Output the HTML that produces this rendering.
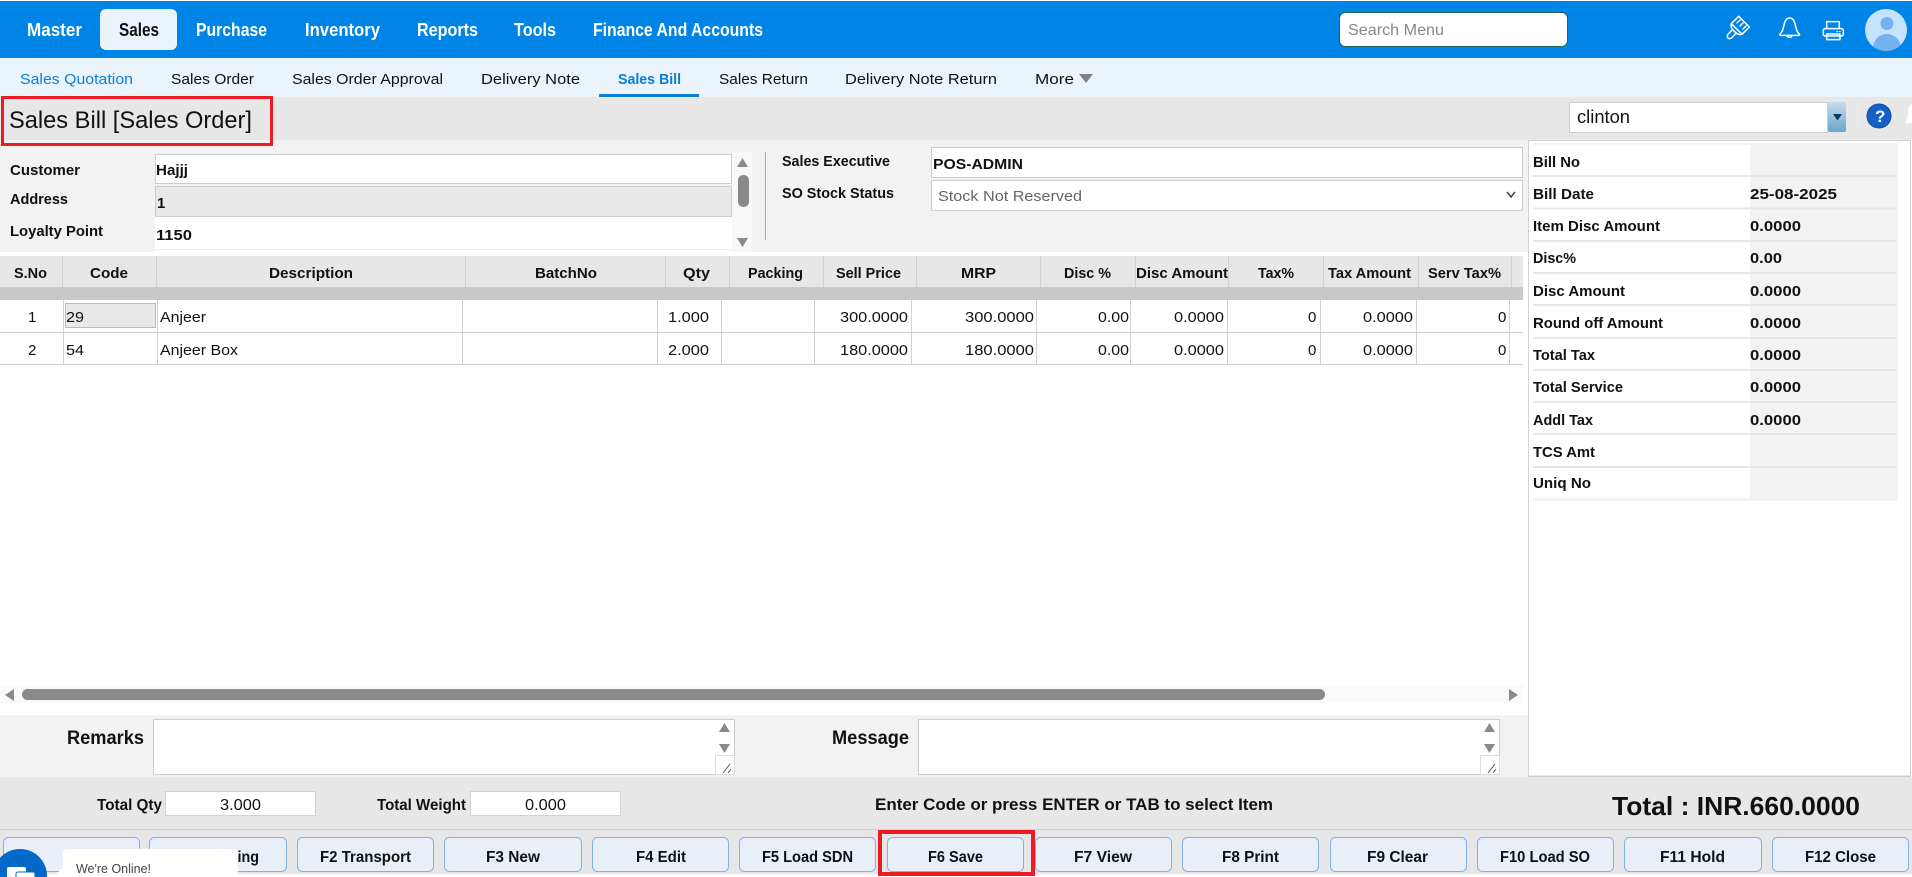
<!DOCTYPE html>
<html lang="en"><head><meta charset="utf-8"><title>Sales Bill [Sales Order]</title>
<style>
html,body{margin:0;padding:0;width:1912px;height:877px;overflow:hidden;background:#fff}
svg{display:block;position:absolute;left:0;top:0}
text{font-family:"Liberation Sans",sans-serif;fill:#111;font-size:15px;white-space:pre}
.b{font-weight:700}
.n{font-size:18px;font-weight:700;fill:#fff}
.s{font-size:15px;fill:#111}
.sb{font-size:15px;fill:#0a7fd9}
.btn{font-size:16px;font-weight:700}
</style></head><body>
<svg width="1912" height="877" viewBox="0 0 1912 877" xmlns="http://www.w3.org/2000/svg">
<defs>
<linearGradient id="ga" x1="0" y1="0" x2="0" y2="1"><stop offset="0" stop-color="#c6dcec"/><stop offset="1" stop-color="#6ba5ce"/></linearGradient>
<clipPath id="av"><circle cx="1886" cy="30" r="21"/></clipPath>
</defs>
<rect width="1912" height="877" fill="#fff"/>
<!-- top nav -->
<rect x="0" y="1" width="1912" height="57" fill="#0084e6"/>
<rect x="100" y="9" width="77" height="41" rx="6" fill="#eaf3fb"/>
<text class="n" x="27" y="36" textLength="55" lengthAdjust="spacingAndGlyphs">Master</text>
<text class="n" x="119" y="36" textLength="40" lengthAdjust="spacingAndGlyphs" style="fill:#111">Sales</text>
<text class="n" x="196" y="36" textLength="71" lengthAdjust="spacingAndGlyphs">Purchase</text>
<text class="n" x="305" y="36" textLength="75" lengthAdjust="spacingAndGlyphs">Inventory</text>
<text class="n" x="417" y="36" textLength="61" lengthAdjust="spacingAndGlyphs">Reports</text>
<text class="n" x="514" y="36" textLength="42" lengthAdjust="spacingAndGlyphs">Tools</text>
<text class="n" x="593" y="36" textLength="170" lengthAdjust="spacingAndGlyphs">Finance And Accounts</text>
<rect x="1339.500" y="12.500" width="228" height="34" rx="6" fill="#fff" stroke="#1f6b4a"/>
<text x="1348" y="35" textLength="96" lengthAdjust="spacingAndGlyphs" style="font-size:16px;fill:#888">Search Menu</text>
<!-- header icons -->
<g transform="translate(1720,10) scale(.3333)" fill="none" stroke="#fff" stroke-width="4.5" stroke-linejoin="round" stroke-linecap="round">
<path d="M56 19L88 51L66 73L34 41Z"/>
<path d="M60 30l-9 9M69 39l-9 9M78 48l-9 9"/>
<path d="M34 41c-3 8 2 17 8 22M66 73c-8 3-18-2-24-10"/>
<path d="M38 58L24 73a7 7 0 0 0 10 11L49 69"/>
<path d="M180 72C195 62 188 24 209 24C230 24 223 62 238 72C240 74 239 76 236 76H182C179 76 178 74 180 72Z"/>
<path d="M201 77a8 8 0 0 0 15 0"/>
<path d="M320 56V35H358V56"/>
<rect x="310" y="56" width="60" height="22" rx="5"/>
<path d="M320 72H360V89H320Z"/>
<path d="M350 65h3M358 65h3" stroke-width="3"/>
</g>
<circle cx="1886" cy="30" r="21" fill="#c5e3ff"/>
<g clip-path="url(#av)"><circle cx="1887" cy="23.500" r="6.500" fill="#73b3ef"/><ellipse cx="1887" cy="48" rx="14" ry="14" fill="#73b3ef"/></g>
<!-- sub nav -->
<rect x="0" y="58" width="1912" height="39" fill="#ebf3fb"/>
<text class="sb" x="20" y="84" textLength="113" lengthAdjust="spacingAndGlyphs">Sales Quotation</text>
<text class="s" x="171" y="84" textLength="83" lengthAdjust="spacingAndGlyphs">Sales Order</text>
<text class="s" x="292" y="84" textLength="151" lengthAdjust="spacingAndGlyphs">Sales Order Approval</text>
<text class="s" x="481" y="84" textLength="99" lengthAdjust="spacingAndGlyphs">Delivery Note</text>
<text class="sb b" x="618" y="84" textLength="63" lengthAdjust="spacingAndGlyphs">Sales Bill</text>
<rect x="599" y="94" width="100" height="3" fill="#0a7fd9"/>
<text class="s" x="719" y="84" textLength="89" lengthAdjust="spacingAndGlyphs">Sales Return</text>
<text class="s" x="845" y="84" textLength="152" lengthAdjust="spacingAndGlyphs">Delivery Note Return</text>
<text class="s" x="1035" y="84" textLength="39" lengthAdjust="spacingAndGlyphs">More</text>
<path d="M1079 74h14l-7 9z" fill="#808080"/>
<!-- title bar -->
<rect x="0" y="97" width="1912" height="43" fill="#e7e7e7"/>
<text x="9" y="128" textLength="243" lengthAdjust="spacingAndGlyphs" style="font-size:24px">Sales Bill [Sales Order]</text>
<rect x="1569.500" y="102.500" width="258" height="30" fill="#fff" stroke="#ccc"/>
<text x="1577" y="123" textLength="53" lengthAdjust="spacingAndGlyphs" style="font-size:18px">clinton</text>
<rect x="1828" y="102" width="18" height="30" rx="2" fill="url(#ga)"/>
<path d="M1833 114h9l-4.500 6.500z" fill="#0f3560"/>
<rect x="1857" y="103" width="1" height="28" fill="#eee"/>
<circle cx="1879" cy="116" r="12" fill="#1560c8" stroke="#134a8e"/>
<text x="1875" y="122" class="b" style="font-size:17px;fill:#fff">?</text>
<path d="M1912 104c-3 1-4 4-4 8 0 5-1 7-2 9v2h6z" fill="#fff"/>
<!-- form -->
<rect x="0" y="140" width="1528" height="112" fill="#f2f2f2"/>
<rect x="155.500" y="154.500" width="576" height="29" fill="#fff" stroke="#ccc"/>
<rect x="155.500" y="186.500" width="576" height="30" fill="#e8e8e8" stroke="#ccc"/>
<rect x="155" y="217" width="577" height="35" fill="#fff"/>
<rect x="155" y="249" width="577" height="1" fill="#eee"/>
<rect x="732" y="152" width="20" height="100" fill="#f8f8f8"/>
<path d="M737 167l5.500-9 5.500 9z" fill="#8a8a8a"/>
<path d="M737 238l5.500 9 5.500-9z" fill="#8a8a8a"/>
<rect x="738" y="175" width="11" height="32" rx="5" fill="#8a8a8a"/>
<rect x="765" y="152" width="1" height="88" fill="#aaa"/>
<text class="b" x="10" y="175" textLength="70" lengthAdjust="spacingAndGlyphs">Customer</text>
<text class="b" x="10" y="204" textLength="58" lengthAdjust="spacingAndGlyphs">Address</text>
<text class="b" x="10" y="236" textLength="93" lengthAdjust="spacingAndGlyphs">Loyalty Point</text>
<text class="b" x="156" y="175" textLength="32" lengthAdjust="spacingAndGlyphs">Hajjj</text>
<text class="b" x="157" y="208">1</text>
<text class="b" x="156" y="240" textLength="36" lengthAdjust="spacingAndGlyphs">1150</text>
<text class="b" x="782" y="166" textLength="108" lengthAdjust="spacingAndGlyphs">Sales Executive</text>
<text class="b" x="782" y="198" textLength="112" lengthAdjust="spacingAndGlyphs">SO Stock Status</text>
<rect x="931.500" y="147.500" width="591" height="30" fill="#fff" stroke="#ccc"/>
<rect x="931.500" y="180.500" width="591" height="30" fill="#fff" stroke="#ccc"/>
<text class="b" x="933" y="169" textLength="90" lengthAdjust="spacingAndGlyphs">POS-ADMIN</text>
<text x="938" y="201" textLength="144" lengthAdjust="spacingAndGlyphs" style="fill:#666">Stock Not Reserved</text>
<path d="M1507 192l4 5 4-5" fill="none" stroke="#444" stroke-width="1.500"/>
<!-- page title highlight -->
<rect x="2.500" y="97.500" width="269" height="47" fill="none" stroke="#ed1c24" stroke-width="3"/>
<!-- grid header -->
<rect x="0" y="256" width="1523" height="31" fill="#e7e7e7"/>
<rect x="0" y="287" width="1523" height="13" fill="#c8c8c8"/>
<g fill="#d2d2d2">
<rect x="62" y="256" width="1" height="31"/><rect x="156" y="256" width="1" height="31"/><rect x="465" y="256" width="1" height="31"/><rect x="665" y="256" width="1" height="31"/><rect x="729" y="256" width="1" height="31"/><rect x="823" y="256" width="1" height="31"/><rect x="916" y="256" width="1" height="31"/><rect x="1040" y="256" width="1" height="31"/><rect x="1135" y="256" width="1" height="31"/><rect x="1228" y="256" width="1" height="31"/><rect x="1323" y="256" width="1" height="31"/><rect x="1418" y="256" width="1" height="31"/><rect x="1511" y="256" width="1" height="31"/>
</g>
<text class="b" x="14" y="278" textLength="33" lengthAdjust="spacingAndGlyphs">S.No</text>
<text class="b" x="90" y="278" textLength="38" lengthAdjust="spacingAndGlyphs">Code</text>
<text class="b" x="269" y="278" textLength="84" lengthAdjust="spacingAndGlyphs">Description</text>
<text class="b" x="535" y="278" textLength="62" lengthAdjust="spacingAndGlyphs">BatchNo</text>
<text class="b" x="683" y="278" textLength="27" lengthAdjust="spacingAndGlyphs">Qty</text>
<text class="b" x="748" y="278" textLength="55" lengthAdjust="spacingAndGlyphs">Packing</text>
<text class="b" x="836" y="278" textLength="65" lengthAdjust="spacingAndGlyphs">Sell Price</text>
<text class="b" x="961" y="278" textLength="35" lengthAdjust="spacingAndGlyphs">MRP</text>
<text class="b" x="1064" y="278" textLength="47" lengthAdjust="spacingAndGlyphs">Disc %</text>
<text class="b" x="1136" y="278" textLength="92" lengthAdjust="spacingAndGlyphs">Disc Amount</text>
<text class="b" x="1258" y="278" textLength="36" lengthAdjust="spacingAndGlyphs">Tax%</text>
<text class="b" x="1328" y="278" textLength="83" lengthAdjust="spacingAndGlyphs">Tax Amount</text>
<text class="b" x="1428" y="278" textLength="73" lengthAdjust="spacingAndGlyphs">Serv Tax%</text>
<!-- grid rows -->
<rect x="0" y="332" width="1523" height="1" fill="#ccc"/>
<rect x="0" y="364" width="1523" height="1" fill="#ccc"/>
<g fill="#d2d2d2">
<rect x="63" y="300" width="1" height="64"/><rect x="157" y="300" width="1" height="64"/><rect x="462" y="300" width="1" height="64"/><rect x="657" y="300" width="1" height="64"/><rect x="721" y="300" width="1" height="64"/><rect x="814" y="300" width="1" height="64"/><rect x="911" y="300" width="1" height="64"/><rect x="1036" y="300" width="1" height="64"/><rect x="1130" y="300" width="1" height="64"/><rect x="1227" y="300" width="1" height="64"/><rect x="1320" y="300" width="1" height="64"/><rect x="1416" y="300" width="1" height="64"/><rect x="1509" y="300" width="1" height="64"/>
</g>
<rect x="65.500" y="303.500" width="90" height="24" fill="#e8e8e8" stroke="#bbb"/>
<text x="28" y="322">1</text>
<text x="66" y="322" textLength="18" lengthAdjust="spacingAndGlyphs">29</text>
<text x="160" y="322" textLength="46" lengthAdjust="spacingAndGlyphs">Anjeer</text>
<text x="668" y="322" textLength="41" lengthAdjust="spacingAndGlyphs">1.000</text>
<text x="840" y="322" textLength="68" lengthAdjust="spacingAndGlyphs">300.0000</text>
<text x="965" y="322" textLength="69" lengthAdjust="spacingAndGlyphs">300.0000</text>
<text x="1098" y="322" textLength="31" lengthAdjust="spacingAndGlyphs">0.00</text>
<text x="1174" y="322" textLength="50" lengthAdjust="spacingAndGlyphs">0.0000</text>
<text x="1308" y="322">0</text>
<text x="1363" y="322" textLength="50" lengthAdjust="spacingAndGlyphs">0.0000</text>
<text x="1498" y="322">0</text>
<text x="28" y="355">2</text>
<text x="66" y="355" textLength="18" lengthAdjust="spacingAndGlyphs">54</text>
<text x="160" y="355" textLength="78" lengthAdjust="spacingAndGlyphs">Anjeer Box</text>
<text x="668" y="355" textLength="41" lengthAdjust="spacingAndGlyphs">2.000</text>
<text x="840" y="355" textLength="68" lengthAdjust="spacingAndGlyphs">180.0000</text>
<text x="965" y="355" textLength="69" lengthAdjust="spacingAndGlyphs">180.0000</text>
<text x="1098" y="355" textLength="31" lengthAdjust="spacingAndGlyphs">0.00</text>
<text x="1174" y="355" textLength="50" lengthAdjust="spacingAndGlyphs">0.0000</text>
<text x="1308" y="355">0</text>
<text x="1363" y="355" textLength="50" lengthAdjust="spacingAndGlyphs">0.0000</text>
<text x="1498" y="355">0</text>
<!-- h scroll -->
<rect x="0" y="685" width="1523" height="18" fill="#fafafa"/>
<rect x="22" y="689" width="1303" height="11" rx="5.500" fill="#8a8a8a"/>
<path d="M14 689v12l-9-6z" fill="#8a8a8a"/>
<path d="M1509 689v12l9-6z" fill="#8a8a8a"/>
<!-- right panel -->
<rect x="1528.500" y="140.500" width="382" height="636" fill="#fff" stroke="#d4d4d4"/>
<rect x="1528" y="775.500" width="383" height="2" fill="#ccc"/>
<rect x="1533" y="143" width="365" height="358" fill="#f2f2f2"/>
<g fill="#fff">
<rect x="1533" y="145" width="217" height="30"/><rect x="1533" y="177" width="217" height="31"/><rect x="1533" y="209" width="217" height="31"/><rect x="1533" y="242" width="217" height="30"/><rect x="1533" y="274" width="217" height="30"/><rect x="1533" y="306" width="217" height="31"/><rect x="1533" y="339" width="217" height="30"/><rect x="1533" y="371" width="217" height="30"/><rect x="1533" y="403" width="217" height="30"/><rect x="1533" y="435" width="217" height="31"/><rect x="1533" y="468" width="217" height="30"/>
</g>
<g fill="#e6e6e6">
<rect x="1533" y="175" width="363" height="2"/><rect x="1533" y="207.500" width="363" height="2"/><rect x="1533" y="240" width="363" height="2"/><rect x="1533" y="272" width="363" height="2"/><rect x="1533" y="304" width="363" height="2"/><rect x="1533" y="337" width="363" height="2"/><rect x="1533" y="369" width="363" height="2"/><rect x="1533" y="401" width="363" height="2"/><rect x="1533" y="433" width="363" height="2"/><rect x="1533" y="466" width="363" height="2"/>
</g>
<text class="b" x="1533" y="167" textLength="47" lengthAdjust="spacingAndGlyphs">Bill No</text>
<text class="b" x="1533" y="199" textLength="61" lengthAdjust="spacingAndGlyphs">Bill Date</text>
<text class="b" x="1533" y="231" textLength="127" lengthAdjust="spacingAndGlyphs">Item Disc Amount</text>
<text class="b" x="1533" y="263" textLength="43" lengthAdjust="spacingAndGlyphs">Disc%</text>
<text class="b" x="1533" y="296" textLength="92" lengthAdjust="spacingAndGlyphs">Disc Amount</text>
<text class="b" x="1533" y="328" textLength="130" lengthAdjust="spacingAndGlyphs">Round off Amount</text>
<text class="b" x="1533" y="360" textLength="62" lengthAdjust="spacingAndGlyphs">Total Tax</text>
<text class="b" x="1533" y="392" textLength="90" lengthAdjust="spacingAndGlyphs">Total Service</text>
<text class="b" x="1533" y="425" textLength="60" lengthAdjust="spacingAndGlyphs">Addl Tax</text>
<text class="b" x="1533" y="457" textLength="62" lengthAdjust="spacingAndGlyphs">TCS Amt</text>
<text class="b" x="1533" y="488" textLength="58" lengthAdjust="spacingAndGlyphs">Uniq No</text>
<text class="b" x="1750" y="199" textLength="87" lengthAdjust="spacingAndGlyphs">25-08-2025</text>
<text class="b" x="1750" y="231" textLength="51" lengthAdjust="spacingAndGlyphs">0.0000</text>
<text class="b" x="1750" y="263" textLength="32" lengthAdjust="spacingAndGlyphs">0.00</text>
<text class="b" x="1750" y="296" textLength="51" lengthAdjust="spacingAndGlyphs">0.0000</text>
<text class="b" x="1750" y="328" textLength="51" lengthAdjust="spacingAndGlyphs">0.0000</text>
<text class="b" x="1750" y="360" textLength="51" lengthAdjust="spacingAndGlyphs">0.0000</text>
<text class="b" x="1750" y="392" textLength="51" lengthAdjust="spacingAndGlyphs">0.0000</text>
<text class="b" x="1750" y="425" textLength="51" lengthAdjust="spacingAndGlyphs">0.0000</text>
<!-- remarks -->
<rect x="0" y="715" width="1528" height="62" fill="#f2f2f2"/>
<text class="b" x="67" y="744" textLength="77" lengthAdjust="spacingAndGlyphs" style="font-size:19px">Remarks</text>
<text class="b" x="832" y="744" textLength="77" lengthAdjust="spacingAndGlyphs" style="font-size:19px">Message</text>
<rect x="153.500" y="719.500" width="581" height="55" fill="#fff" stroke="#ccc"/>
<rect x="918.500" y="719.500" width="581" height="55" fill="#fff" stroke="#ccc"/>
<path d="M719 732l5.500-9 5.500 9zM719 744l5.500 9 5.500-9z" fill="#8a8a8a"/>
<path d="M1484 732l5.500-9 5.500 9zM1484 744l5.500 9 5.500-9z" fill="#8a8a8a"/>
<rect x="715.500" y="755.500" width="19" height="19" fill="#fff" stroke="#ddd"/>
<rect x="1480.500" y="755.500" width="19" height="19" fill="#fff" stroke="#ddd"/>
<path d="M723 773l7-9M728 773l3-4M1488 773l7-9M1493 773l3-4" stroke="#555" fill="none"/>
<!-- totals bar -->
<rect x="0" y="777" width="1912" height="97" fill="#e7e7e7"/>
<rect x="0" y="829" width="1912" height="1" fill="#d0d0d0"/>
<text class="b" x="97" y="810" textLength="65" lengthAdjust="spacingAndGlyphs" style="font-size:16px">Total Qty</text>
<rect x="165.500" y="791.500" width="150" height="24" fill="#fff" stroke="#d2d2d2"/>
<text x="220" y="810" textLength="41" lengthAdjust="spacingAndGlyphs" style="font-size:16px">3.000</text>
<text class="b" x="377" y="810" textLength="89" lengthAdjust="spacingAndGlyphs" style="font-size:16px">Total Weight</text>
<rect x="470.500" y="791.500" width="150" height="24" fill="#fff" stroke="#d2d2d2"/>
<text x="525" y="810" textLength="41" lengthAdjust="spacingAndGlyphs" style="font-size:16px">0.000</text>
<text class="b" x="875" y="810" textLength="398" lengthAdjust="spacingAndGlyphs" style="font-size:17px">Enter Code or press ENTER or TAB to select Item</text>
<text class="b" x="1612" y="815" textLength="248" lengthAdjust="spacingAndGlyphs" style="font-size:26px">Total : INR.660.0000</text>
<!-- buttons -->
<g fill="#e9eff8" stroke="#7fb3e8">
<rect x="3.500" y="837.500" width="136" height="34" rx="5"/><rect x="149.500" y="837.500" width="137" height="34" rx="5"/><rect x="297.500" y="837.500" width="136" height="34" rx="5"/><rect x="444.500" y="837.500" width="137" height="34" rx="5"/><rect x="592.500" y="837.500" width="136" height="34" rx="5"/><rect x="739.500" y="837.500" width="136" height="34" rx="5"/><rect x="887.500" y="837.500" width="136" height="34" rx="5"/><rect x="1035.500" y="837.500" width="136" height="34" rx="5"/><rect x="1182.500" y="837.500" width="136" height="34" rx="5"/><rect x="1330.500" y="837.500" width="136" height="34" rx="5"/><rect x="1477.500" y="837.500" width="136" height="34" rx="5"/><rect x="1624.500" y="837.500" width="137" height="34" rx="5"/><rect x="1772.500" y="837.500" width="136" height="34" rx="5"/>
</g>
<text class="btn" x="177" y="862" textLength="82" lengthAdjust="spacingAndGlyphs">F1 Shipping</text>
<text class="btn" x="320" y="862" textLength="91" lengthAdjust="spacingAndGlyphs">F2 Transport</text>
<text class="btn" x="486" y="862" textLength="54" lengthAdjust="spacingAndGlyphs">F3 New</text>
<text class="btn" x="636" y="862" textLength="50" lengthAdjust="spacingAndGlyphs">F4 Edit</text>
<text class="btn" x="762" y="862" textLength="91" lengthAdjust="spacingAndGlyphs">F5 Load SDN</text>
<text class="btn" x="928" y="862" textLength="55" lengthAdjust="spacingAndGlyphs">F6 Save</text>
<text class="btn" x="1074" y="862" textLength="58" lengthAdjust="spacingAndGlyphs">F7 View</text>
<text class="btn" x="1222" y="862" textLength="57" lengthAdjust="spacingAndGlyphs">F8 Print</text>
<text class="btn" x="1367" y="862" textLength="61" lengthAdjust="spacingAndGlyphs">F9 Clear</text>
<text class="btn" x="1500" y="862" textLength="90" lengthAdjust="spacingAndGlyphs">F10 Load SO</text>
<text class="btn" x="1660" y="862" textLength="65" lengthAdjust="spacingAndGlyphs">F11 Hold</text>
<text class="btn" x="1805" y="862" textLength="71" lengthAdjust="spacingAndGlyphs">F12 Close</text>
<rect x="880" y="832" width="153" height="42" fill="none" stroke="#ed1c24" stroke-width="4"/>
<!-- chat widget -->
<circle cx="20" cy="876" r="27" fill="#0468c9"/>
<rect x="7" y="867" width="19" height="14" rx="2" fill="#fff"/>
<rect x="16" y="872" width="19" height="10" rx="2" fill="#fff" stroke="#0468c9"/>
<path d="M63 868l-7 6 7 3z" fill="#fff"/>
<rect x="63" y="849" width="175" height="32" rx="4" fill="#fff"/>
<text x="76" y="873" textLength="75" lengthAdjust="spacingAndGlyphs" style="font-size:13px;fill:#444">We're Online!</text>
</svg>
</body></html>
